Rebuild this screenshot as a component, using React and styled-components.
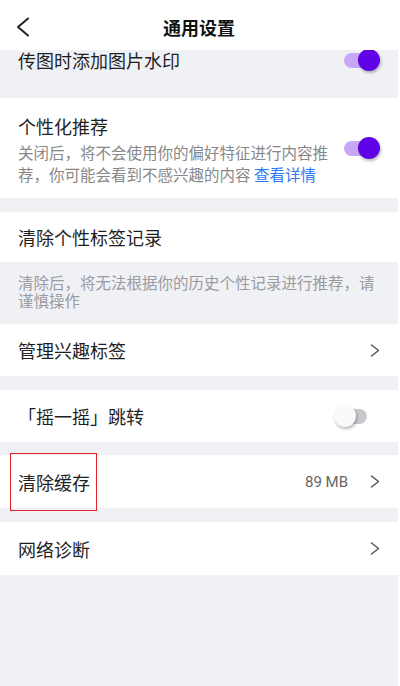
import React from 'react';
import styled, {createGlobalStyle} from 'styled-components';

const Global = createGlobalStyle`
  html, body {
    margin: 0;
    padding: 0;
    background: #fff;
  }
  body {
    font-family: "Noto Sans CJK SC", "Noto Sans", sans-serif;
    -webkit-font-smoothing: antialiased;
  }
`;

const Page = styled.div`
  width: 398px;
  min-height: 100vh;
  background: #f0f1f5;
  border-right: 2px solid #fff;
  display: flex;
  flex-direction: column;
`;

const Header = styled.div`
  height: 50px;
  padding-top: 3px;
  box-sizing: border-box;
  background: #fff;
  display: grid;
  grid-template-columns: 48px 1fr 48px;
  align-items: center;
`;

const Back = styled.button`
  border: 0;
  background: none;
  padding: 0 0 0 16px;
  display: flex;
  align-items: center;
`;

const Title = styled.h1`
  margin: 0;
  font-size: 18px;
  font-weight: 700;
  color: #111;
  text-align: center;
`;

const Group = styled.div`
  margin-top: ${p => p.gap}px;
  background: #fff;
  display: flex;
  flex-direction: column;
`;

const Clip = styled.div`
  height: 35px;
  overflow: hidden;
  display: flex;
  flex-direction: column;
  justify-content: flex-end;
`;

const Row = styled.div`
  position: relative;
  flex: none;
  min-height: ${p => p.h}px;
  padding: 0 18px;
  box-sizing: border-box;
  display: flex;
  align-items: center;
`;

const TextBlock = styled.div`
  flex: 1;
  padding: 16px 0 13px;
  display: flex;
  flex-direction: column;
  gap: 3px;
`;

const Label = styled.div`
  flex: 1;
  font-size: 18px;
  line-height: 24px;
  color: #1f1f1f;
`;

const Desc = styled.div`
  font-size: 15.5px;
  line-height: 22px;
  color: #888;
`;

const Link = styled.span`
  color: #3079f4;
`;

const Note = styled.div`
  background: #f0f1f5;
  padding: 11px 18px 15px;
  font-size: 15.5px;
  line-height: 18px;
  color: #9b9b9f;
`;

const Value = styled.span`
  font-family: Roboto, "Noto Sans", sans-serif;
  font-size: 15px;
  color: #666;
  margin-right: 22px;
`;

const SwitchBox = styled.div`
  position: relative;
  width: 46px;
  height: 22px;
  flex: none;
`;

const Track = styled.div`
  position: absolute;
  top: 4px;
  left: ${p => (p.on ? 10 : 3)}px;
  width: 30px;
  height: 15px;
  border-radius: 8px;
  background: ${p => (p.on ? '#c6a8f6' : '#c9c9cd')};
`;

const Thumb = styled.div`
  position: absolute;
  top: 0;
  left: ${p => (p.on ? 24 : 0)}px;
  width: 22px;
  height: 22px;
  border-radius: 50%;
  background: ${p => (p.on ? '#6002e8' : '#fafafa')};
  box-shadow: 1px 2px 3px rgba(0, 0, 0, 0.28);
`;

const Marker = styled.div`
  position: absolute;
  left: 10px;
  top: -2px;
  width: 87px;
  height: 58px;
  box-sizing: border-box;
  border: 1.5px solid #e0242c;
  pointer-events: none;
`;

const Switch = ({on}) => (
  <SwitchBox>
    <Track on={on} />
    <Thumb on={on} />
  </SwitchBox>
);

const Chevron = () => (
  <svg width="10" height="13" viewBox="0 0 10 13" fill="none">
    <path d="M1.5 1L8.5 6.5L1.5 12" stroke="#555" strokeWidth="1.5" strokeLinecap="round" strokeLinejoin="round" />
  </svg>
);

export default function App() {
  return (
    <>
      <Global />
      <Page>
        <Header>
          <Back aria-label="返回">
            <svg width="14" height="20" viewBox="0 0 14 20" fill="none">
              <path d="M12 1.5L2 10L12 18.5" stroke="#222" strokeWidth="2" strokeLinecap="round" strokeLinejoin="round" />
            </svg>
          </Back>
          <Title>通用设置</Title>
          <span />
        </Header>

        <Clip>
          <Row h={50}>
            <Label>传图时添加图片水印</Label>
            <Switch on />
          </Row>
        </Clip>

        <Group gap={13}>
          <Row h={100}>
            <TextBlock>
              <Label>个性化推荐</Label>
              <Desc>
                关闭后，将不会使用你的偏好特征进行内容推荐，你可能会看到不感兴趣的内容 <Link>查看详情</Link>
              </Desc>
            </TextBlock>
            <Switch on />
          </Row>
        </Group>

        <Group gap={14}>
          <Row h={50}>
            <Label>清除个性标签记录</Label>
          </Row>
          <Note>清除后，将无法根据你的历史个性记录进行推荐，请谨慎操作</Note>
          <Row h={52}>
            <Label>管理兴趣标签</Label>
            <Chevron />
          </Row>
        </Group>

        <Group gap={14}>
          <Row h={52}>
            <Label>「摇一摇」跳转</Label>
            <Switch />
          </Row>
        </Group>

        <Group gap={13}>
          <Row h={53}>
            <Label>清除缓存</Label>
            <Value>89 MB</Value>
            <Chevron />
            <Marker />
          </Row>
        </Group>

        <Group gap={14}>
          <Row h={53}>
            <Label>网络诊断</Label>
            <Chevron />
          </Row>
        </Group>
      </Page>
    </>
  );
}
